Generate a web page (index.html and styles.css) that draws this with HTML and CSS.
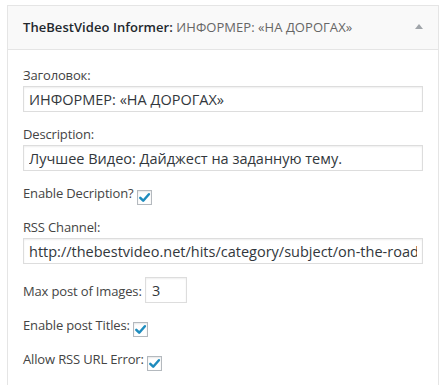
FILE: index.html
```html
<!DOCTYPE html>
<html lang="ru">
<head>
<meta charset="utf-8">
<title>TheBestVideo Informer</title>
<link rel="stylesheet" href="styles.css">
</head>
<body>
<div class="widget">
  <div class="widget-top">
    <h3 class="widget-title">TheBestVideo Informer:<span class="in-title"> ИНФОРМЕР: «НА ДОРОГАХ»</span></h3>
    <span class="toggle" aria-hidden="true">
      <svg width="8" height="5" viewBox="0 0 8 5"><path d="M0 5 L4 0 L8 5 Z" fill="#a0a5aa"/></svg>
    </span>
  </div>
  <div class="widget-inside">
    <p class="field">
      <label class="label-block" for="f-title">Заголовок:</label>
      <input class="widefat" id="f-title" type="text" value="ИНФОРМЕР: «НА ДОРОГАХ»">
    </p>
    <p class="field">
      <label class="label-block" for="f-desc">Description:</label>
      <input class="widefat" id="f-desc" type="text" value="Лучшее Видео: Дайджест на заданную тему.">
    </p>
    <p class="field check-row">
      <label>Enable Decription? <span class="checkbox"><svg width="13" height="13" viewBox="0 0 13 13"><path d="M2.3 6.8 L5.2 9.7 L10.9 3.2" fill="none" stroke="#1e8cbe" stroke-width="2.5" stroke-linecap="round" stroke-linejoin="round"/></svg></span></label>
    </p>
    <p class="field">
      <label class="label-block" for="f-rss">RSS Channel:</label>
      <input class="widefat" id="f-rss" type="text" value="http://thebestvideo.net/hits/category/subject/on-the-road">
    </p>
    <p class="field">
      <label for="f-max">Max post of Images:</label>
      <input class="small" id="f-max" type="text" value="3">
    </p>
    <p class="field check-row">
      <label>Enable post Titles: <span class="checkbox"><svg width="13" height="13" viewBox="0 0 13 13"><path d="M2.3 6.8 L5.2 9.7 L10.9 3.2" fill="none" stroke="#1e8cbe" stroke-width="2.5" stroke-linecap="round" stroke-linejoin="round"/></svg></span></label>
    </p>
    <p class="field check-row">
      <label>Allow RSS URL Error: <span class="checkbox"><svg width="13" height="13" viewBox="0 0 13 13"><path d="M2.3 6.8 L5.2 9.7 L10.9 3.2" fill="none" stroke="#1e8cbe" stroke-width="2.5" stroke-linecap="round" stroke-linejoin="round"/></svg></span></label>
    </p>
  </div>
</div>
</body>
</html>
```
FILE: styles.css
```css
html, body {
  background: #ffffff;
}
body {
  margin: 5px 0 0 7px;
  font-family: "Open Sans", "Liberation Sans", sans-serif;
  font-size: 13px;
  color: #444444;
}
.widget {
  width: 432px;
  box-sizing: border-box;
  border: 1px solid #e5e5e5;
  border-bottom: none;
  background: #ffffff;
}
.widget-top {
  display: flex;
  align-items: center;
  justify-content: space-between;
  background: #f9f9f9;
  border-bottom: 1px solid #e5e5e5;
}
.widget-title {
  margin: 0;
  padding: 15px;
  font-size: 13px;
  line-height: 13px;
  font-weight: 600;
  letter-spacing: 0.05px;
  color: #23282d;
  white-space: nowrap;
}
.in-title {
  font-weight: 400;
  color: #666666;
}
.toggle {
  display: flex;
  padding-right: 15px;
  margin-top: -2px;
}
.widget-inside {
  padding: 3px 15px 30px;
}
.field {
  margin: 13px 0;
  line-height: 18px;
  letter-spacing: -0.15px;
}
.label-block {
  display: block;
  margin-bottom: 2px;
}
.widefat, .small {
  box-sizing: border-box;
  height: 26px;
  border: 1px solid #dddddd;
  box-shadow: inset 0 1px 2px rgba(0, 0, 0, 0.07);
  background: #ffffff;
  padding: 3px 5px;
  margin: 0;
  font-family: "Open Sans", "Liberation Sans", sans-serif;
  font-size: 14.5px;
  line-height: 18px;
  letter-spacing: 0;
  color: #32373c;
  outline: none;
}
.widefat {
  display: block;
  width: 400px;
}
.small {
  width: 42px;
  padding: 3px 6px;
}
.checkbox {
  display: inline-flex;
  align-items: center;
  justify-content: center;
  box-sizing: border-box;
  width: 15px;
  height: 15px;
  border: 1px solid #b4b9be;
  background: #ffffff;
  box-shadow: inset 0 1px 2px rgba(0, 0, 0, 0.1);
  vertical-align: -6px;
}
```
